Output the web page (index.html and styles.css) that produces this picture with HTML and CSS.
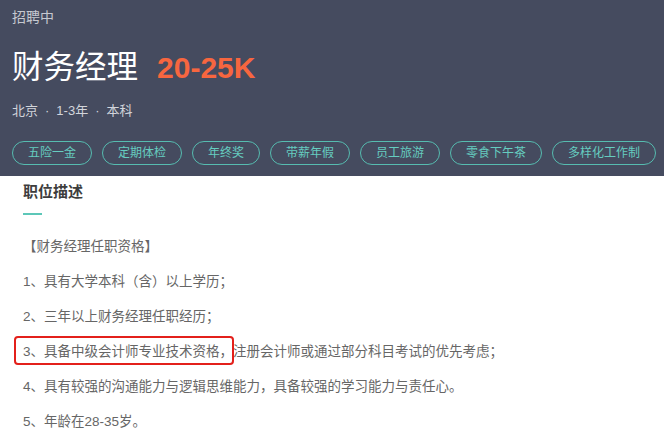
FILE: index.html
```html
<!DOCTYPE html>
<html lang="zh-CN">
<head>
  <meta charset="UTF-8" />
  <meta name="viewport" content="width=device-width, initial-scale=1.0" />
  <title>财务经理</title>
  <link rel="stylesheet" href="styles.css">
</head>
<body>
  <div class="job-header">
    <div class="status">招聘中</div>
    <div class="title-row">
      <h1 class="job-name">财务经理</h1>
      <span class="salary">20-25K</span>
    </div>
    <div class="meta">
      <span>北京</span><span class="dot">·</span><span>1-3年</span><span class="dot">·</span><span>本科</span>
    </div>
    <div class="tags">
      <span class="tag">五险一金</span>
      <span class="tag">定期体检</span>
      <span class="tag">年终奖</span>
      <span class="tag">带薪年假</span>
      <span class="tag">员工旅游</span>
      <span class="tag">零食下午茶</span>
      <span class="tag">多样化工作制</span>
    </div>
  </div>

  <div class="job-detail">
    <h2 class="section-title">职位描述</h2>
    <div class="title-bar"></div>
    <div class="desc">
      <p>【财务经理任职资格】</p>
      <p>1、具有大学本科（含）以上学历；</p>
      <p>2、三年以上财务经理任职经历；</p>
      <p><span class="mark">3、具备中级会计师专业技术资格，</span>注册会计师或通过部分科目考试的优先考虑；</p>
      <p>4、具有较强的沟通能力与逻辑思维能力，具备较强的学习能力与责任心。</p>
      <p>5、年龄在28-35岁。</p>
    </div>
  </div>
</body>
</html>
```

FILE: styles.css
```css
html, body {
  margin: 0;
  padding: 0;
  background: #fff;
  font-family: "Liberation Sans", "Noto Sans CJK SC", sans-serif;
}

.job-header {
  background: #454b5f;
  padding: 7px 12px 11px;
  color: #fff;
}

.status {
  font-size: 14px;
  line-height: 20px;
  color: #c5c8cf;
}

.title-row {
  display: flex;
  align-items: baseline;
  margin-top: 17px;
  line-height: 40px;
}

.job-name {
  margin: 0;
  font-size: 31.5px;
  font-weight: normal;
  font-family: "Noto Sans CJK SC", sans-serif;
}

.salary {
  margin-left: 19px;
  font-size: 30px;
  font-weight: bold;
  color: #f7663f;
}

.meta {
  margin-top: 13px;
  font-size: 13px;
  line-height: 20px;
  color: #d2d5db;
}

.meta .dot {
  margin: 0 7px;
}

.tags {
  display: flex;
  gap: 10px;
  margin-top: 20px;
}

.tag {
  border: 1px solid #56bcb0;
  border-radius: 12px;
  padding: 0 15px;
  font-size: 12px;
  line-height: 22px;
  color: #66cdc0;
  white-space: nowrap;
}

.job-detail {
  padding: 6px 23px 0;
}

.section-title {
  margin: 0;
  font-size: 15px;
  line-height: 20px;
  font-weight: bold;
  color: #3d3d3d;
}

.title-bar {
  width: 19px;
  height: 2px;
  margin-top: 11px;
  background: #5cc7b8;
}

.desc {
  margin-top: 13.5px;
}

.desc p {
  margin: 0;
  font-size: 13.5px;
  line-height: 35px;
  color: #666;
  white-space: nowrap;
}

/* red annotation box over line 3 */
.mark {
  position: relative;
}

.mark::after {
  content: "";
  position: absolute;
  left: -9px;
  right: -1px;
  top: -8px;
  bottom: -6px;
  border: 2px solid #e3201b;
  border-radius: 4px;
}
```
